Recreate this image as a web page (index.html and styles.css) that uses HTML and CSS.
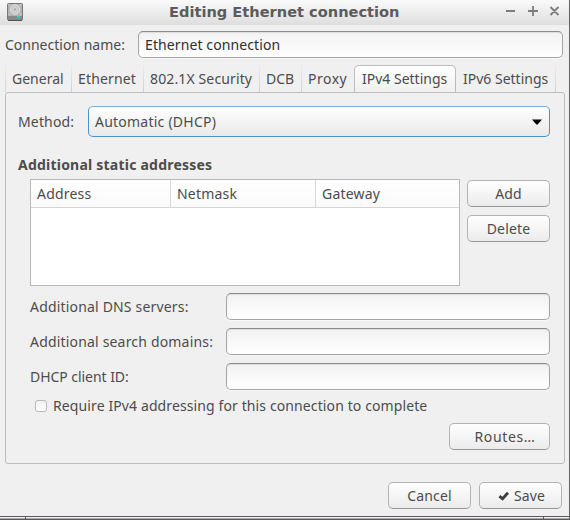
FILE: index.html
```html
<!DOCTYPE html>
<html lang="en">
<head>
<meta charset="utf-8">
<title>Editing Ethernet connection</title>
<link rel="stylesheet" href="styles.css">
</head>
<body>
<main class="window">
  <header class="titlebar">
    <svg class="disk" width="17" height="19" viewBox="0 0 17 19">
      <rect x="0.5" y="0.5" width="15" height="16.5" rx="1" fill="#8f8f8f" stroke="#787878"/>
      <rect x="1" y="1" width="14" height="12" fill="#b4b4b4"/>
      <circle cx="8" cy="6.5" r="4.7" fill="#c9c9c9" stroke="#e2e2e2"/>
      <circle cx="8" cy="6.5" r="2" fill="#b0b0b0" stroke="#dedede"/>
      <path d="M2 2h1M13 2h1M2 11h1M13 11h1" stroke="#e6e6e6"/>
      <rect x="1" y="13" width="14" height="2.5" fill="#888"/>
      <rect x="10" y="13" width="3" height="2" fill="#3cc9c0"/>
      <path d="M1 17.5h14" stroke="#555"/>
    </svg>
    <h1 class="title">Editing Ethernet connection</h1>
    <svg class="controls" width="56" height="12" viewBox="0 0 56 12" fill="none" stroke="#7d7d7d" stroke-width="1.8">
      <path d="M1 6H10M23 6H33M28 1V11M45.5 2L53.5 10M53.5 2L45.5 10"/>
    </svg>
  </header>
  <div class="name-row">
    <label class="name-label">Connection name:</label>
    <div class="entry name-entry">Ethernet connection</div>
  </div>
  <nav class="tabs">
    <span class="tab general">General</span>
    <span class="tab ethernet">Ethernet</span>
    <span class="tab security">802.1X Security</span>
    <span class="tab dcb">DCB</span>
    <span class="tab proxy">Proxy</span>
    <span class="tab active">IPv4 Settings</span>
    <span class="tab ipv6">IPv6 Settings</span>
  </nav>
  <section class="panel">
    <div class="method-row">
      <label class="method-label">Method:</label>
      <div class="combo"><span>Automatic (DHCP)</span>
        <svg width="10" height="6" viewBox="0 0 10 6"><path d="M0 0.5H10L5.6 5.5H4.4Z" fill="#000"/></svg>
      </div>
    </div>
    <h2 class="heading">Additional static addresses</h2>
    <div class="addresses">
      <div class="table">
        <div class="table-head">
          <span>Address</span><span>Netmask</span><span>Gateway</span>
        </div>
      </div>
      <div class="table-actions">
        <div class="button">Add</div>
        <div class="button">Delete</div>
      </div>
    </div>
    <div class="fields">
      <label>Additional DNS servers:</label><div class="entry"></div>
      <label>Additional search domains:</label><div class="entry"></div>
      <label class="client-id">DHCP client ID:</label><div class="entry"></div>
    </div>
    <div class="require"><span class="checkbox"></span><label>Require IPv4 addressing for this connection to complete</label></div>
    <div class="button routes">Routes…</div>
  </section>
  <footer class="actions">
    <div class="button cancel">Cancel</div>
    <div class="button save">
      <svg width="12" height="10" viewBox="0 0 12 10"><path d="M1.4 5.1L4.5 7.8L10 1.8" fill="none" stroke="#3c3c3c" stroke-width="2.8"/></svg>
      <span>Save</span>
    </div>
  </footer>
  <div class="strip"><i></i><i></i><i></i></div>
</main>
</body>
</html>
```
FILE: styles.css
```css
* { box-sizing: border-box; }
body { margin: 0; }
.window {
  width: 570px;
  height: 520px;
  display: flex;
  flex-direction: column;
  background: #f0f0f0;
  border-right: 1px solid #626262;
  color: #4c4c4c;
  font: 14px/20px "Noto Sans", "Open Sans", sans-serif;
  white-space: nowrap;
  overflow: hidden;
}
.titlebar {
  height: 25px;
  flex: none;
  display: flex;
  align-items: flex-start;
  padding: 3px 8px 0 7px;
  background: linear-gradient(#fafafa, #dedede);
}
.title {
  margin: -1px 0 0 145px;
  width: 230px;
  color: #5c5c5c;
  font: bold 14.6px/20px "DejaVu Sans", sans-serif;
}
.controls { margin: 2px 0 0 auto; }
.name-row {
  display: flex;
  align-items: center;
  height: 27px;
  flex: none;
  margin: 6px 6px 0 5px;
}
.name-label { width: 133px; }
.entry {
  height: 27px;
  border: 1px solid #a4a4a4;
  border-top-color: #8c8c8c;
  border-radius: 5px;
  background: linear-gradient(#f2f2f2, #fff);
  box-shadow: inset 0 1px 1px #dcdcdc, 0 1px 0 #f8f8f8;
}
.name-entry {
  flex: 1;
  padding: 3px 6px 0;
  color: #303030;
  letter-spacing: 0.1px;
}
.tabs {
  display: flex;
  height: 27px;
  flex: none;
  margin: 7px 0 0 5px;
}
.tab {
  padding: 4px 0 0 6px;
  border-left: 1px solid transparent;
  border-image: linear-gradient(#eee, #d0d0d0) 1;
  border-width: 0 0 0 1px;
}
.general { width: 66px; }
.ethernet { width: 72px; letter-spacing: 0.15px; }
.security { width: 116px; letter-spacing: 0.13px; }
.dcb { width: 42px; }
.proxy { width: 53px; letter-spacing: 0.5px; }
.active {
  width: 102px;
  padding: 3px 0 0 7px;
  border: 1px solid #bcbcbc;
  border-bottom: 0;
  border-image: none;
  border-radius: 5px 5px 0 0;
  background: linear-gradient(#fff, #f0f0f0);
}
.ipv6 {
  width: 100px;
  padding-left: 7px;
  border-right: 1px solid transparent;
  border-width: 0 1px 0 0;
}
.panel {
  width: 560px;
  height: 372px;
  flex: none;
  margin-left: 5px;
  padding: 13px 14px 0 12px;
  border: 1px solid #bebebe;
  border-radius: 3px;
}
.method-row { display: flex; align-items: center; height: 31px; }
.method-label { width: 70px; letter-spacing: 0.15px; }
.combo {
  flex: 1;
  height: 31px;
  display: flex;
  align-items: center;
  justify-content: space-between;
  padding: 0 7px 0 6px;
  border: 1px solid #4b93cf;
  border-top-color: #7cb0db;
  border-radius: 5px;
  background: linear-gradient(#fff, #e9e9e9);
  letter-spacing: 0.23px;
}
.heading {
  margin: 18px 0 4px;
  font-size: 14px;
  line-height: 20px;
  font-weight: bold;
  letter-spacing: 0.22px;
}
.addresses { display: flex; margin-left: 12px; }
.table {
  width: 430px;
  height: 107px;
  border: 1px solid #b8b8b8;
  background: #fff;
}
.table-head {
  display: flex;
  height: 28px;
  border-bottom: 1px solid #d5d5d5;
  background: linear-gradient(#fff, #fafafa);
  letter-spacing: 0.2px;
}
.table-head span { padding: 4px 0 0 6px; border-left: 1px solid #d8d8d8; }
.table-head span:nth-child(1) { width: 139px; border-left: 0; }
.table-head span:nth-child(2) { width: 145px; }
.table-actions {
  width: 83px;
  margin: 1px 0 0 7px;
  display: flex;
  flex-direction: column;
  gap: 8px;
}
.button {
  height: 27px;
  display: flex;
  align-items: center;
  justify-content: center;
  border: 1px solid #b4b4b4;
  border-bottom-color: #969696;
  border-radius: 5px;
  background: linear-gradient(#fff, #ebebeb);
  letter-spacing: 0.15px;
}
.fields {
  display: grid;
  grid-template-columns: 196px 324px;
  gap: 8px 0;
  align-items: center;
  margin: 7px 0 0 12px;
  letter-spacing: 0.18px;
}
.client-id { letter-spacing: -0.05px; }
.require {
  display: flex;
  align-items: center;
  height: 20px;
  margin: 6px 0 0 17px;
  letter-spacing: 0.11px;
}
.checkbox {
  width: 12px;
  height: 12px;
  margin-right: 6px;
  border: 1px solid #b9b9b9;
  border-radius: 3px;
  background: linear-gradient(#f2f2f2, #fff);
}
.routes {
  width: 101px;
  margin: 7px 0 0 auto;
  padding-left: 11px;
  letter-spacing: 0.65px;
}
.actions {
  display: flex;
  justify-content: flex-end;
  gap: 8px;
  margin: 18px 7px 0 0;
}
.cancel { width: 83px; }
.save { width: 83px; gap: 4px; padding-left: 2px; }
.strip {
  height: 4px;
  display: flex;
  gap: 1px;
  margin-top: 7px;
  border-top: 1px solid #5d585c;
  border-bottom: 1px solid #5d585c;
  background: #5d585c;
}
.strip i { background: linear-gradient(#f4f2f4 50%, #aaa6aa 50%); }
.strip i:nth-child(1) { width: 25px; }
.strip i:nth-child(2) { width: 517px; }
.strip i:nth-child(3) { flex: 1; }
```
